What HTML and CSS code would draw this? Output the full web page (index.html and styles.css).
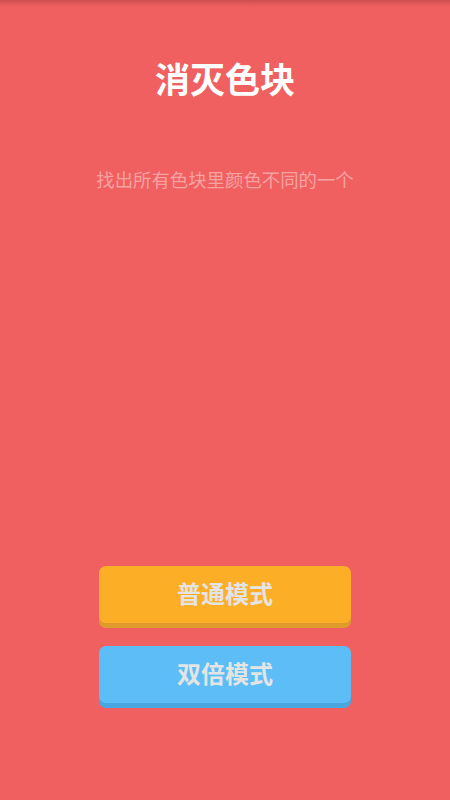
FILE: index.html
```html
<!DOCTYPE html>
<html lang="zh-CN">
<head>
    <meta charset="UTF-8">
    <title>消灭色块</title>
    <link rel="stylesheet" href="styles.css">
</head>
<body>
    <div class="page">
        <div class="topshade"></div>
        <h1 class="title">消灭色块</h1>
        <p class="tip">找出所有色块里颜色不同的一个</p>

        <div class="menu">
            <button class="btn btn-normal">普通模式</button>
            <button class="btn btn-double">双倍模式</button>
        </div>
    </div>
</body>
</html>
```

FILE: styles.css
```css
    html, body {
        margin: 0;
        height: 100%;
    }
    body {
        font-family: "Noto Sans CJK SC", "Noto Sans", sans-serif;
        background: #f06060;
        color: #ffffff;
    }
    .page {
        position: relative;
        height: 100vh;
        display: flex;
        flex-direction: column;
        align-items: center;
        padding-top: 58px;
        box-sizing: border-box;
    }
    .topshade {
        position: absolute;
        left: 0;
        top: 0;
        width: 100%;
        height: 7px;
        background: linear-gradient(to bottom, rgba(120,30,30,0.28), rgba(120,30,30,0));
    }
    .title {
        margin: 0;
        font-size: 35px;
        line-height: 40px;
        font-weight: bold;
    }
    .tip {
        margin: 69px 0 0;
        font-size: 18.4px;
        line-height: 24px;
        color: #f7a2a2;
    }
    .menu {
        margin-top: auto;
        padding-bottom: 97px;
        display: flex;
        flex-direction: column;
        gap: 23px;
    }
    .btn {
        width: 252px;
        height: 57px;
        padding: 0 0 4px;
        border: none;
        border-radius: 7px;
        font-family: inherit;
        font-size: 24px;
        font-weight: bold;
        color: #e4e4e4;
        cursor: pointer;
        outline: none;
    }
    .btn-normal {
        background-color: #fdae27;
        box-shadow: 0 5px 0 #de9b2c;
    }
    .btn-double {
        background-color: #5cbdf7;
        box-shadow: 0 5px 0 #4aa6e0;
    }
```
